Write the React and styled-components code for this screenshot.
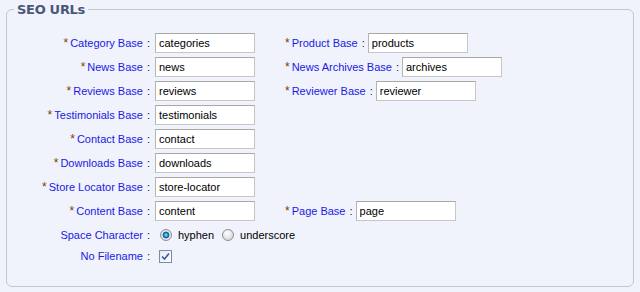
import styled, { createGlobalStyle } from "styled-components";

const GlobalStyle = createGlobalStyle`
    html, body {
        margin: 0;
        padding: 0;
        background: #f0f2fc;
    }
    body {
        font-family: "Liberation Sans", Arial, sans-serif;
        font-size: 11px;
    }
`;

const Page = styled.div`
    width: 640px;
    height: 292px;
    padding: 2px 6px 0 6px;
    box-sizing: border-box;
`;

const Fieldset = styled.fieldset`
    margin: 0;
    padding: 16px 0 20px 0;
    border: 1px solid #c4c6d0;
    border-radius: 6px;
    height: 285px;
    box-sizing: border-box;
`;

const Legend = styled.legend`
    margin-left: 7px;
    padding: 0 3px;
    font-size: 13px;
    font-weight: bold;
    color: #4a5878;
    font-family: "DejaVu Sans", Tahoma, sans-serif;
    letter-spacing: -0.3px;
`;

const Form = styled.div`
    display: flex;
    flex-direction: column;
    gap: 4px;
`;

const Row = styled.div`
    display: flex;
    align-items: center;
    height: ${p => p.$h || 20}px;
`;

const LabelCell = styled.div`
    width: 143px;
    text-align: right;
    flex-shrink: 0;
    white-space: nowrap;
    margin-right: 5px;
`;

const Group = styled.div`
    display: flex;
    align-items: center;
    margin-left: 30px;
`;

const Star = styled.span`
    color: #7a4400;
    font-size: 12px;
    margin-right: 2px;
`;

const Name = styled.span`
    color: #1a1ae6;
`;

const Colon = styled.span`
    color: #222;
    margin-left: 4px;
    margin-right: ${p => p.$after ?? 4}px;
`;

const Input = styled.input`
    width: 100px;
    height: 20px;
    box-sizing: border-box;
    border: 1px solid #c6c6c6;
    border-top-color: #a8a8a8;
    border-left-color: #b4b4b4;
    background: #fff;
    padding: 0 3px;
    font-family: "Liberation Sans", Arial, sans-serif;
    font-size: 11px;
    color: #000;
    outline: none;
`;

const Options = styled.div`
    display: flex;
    align-items: center;
    margin-left: 5px;
    color: #000;
`;

const RadioDot = styled.span`
    width: 12px;
    height: 12px;
    border-radius: 50%;
    box-sizing: border-box;
    border: 1px solid #8a8f98;
    background: ${p => p.$on
        ? "radial-gradient(circle at 50% 50%, #9fe0ff 0, #1e88c8 2px, #0a4f80 3.4px, #e8ebee 3.6px, #d2d6da 100%)"
        : "radial-gradient(circle at 40% 35%, #ffffff 0, #e4e6e8 50%, #c8ccd0 100%)"};
    margin-right: 6px;
`;

const OptText = styled.span`
    margin-right: ${p => p.$gap || 0}px;
`;

const Check = styled.span`
    width: 13px;
    height: 13px;
    box-sizing: border-box;
    border: 1px solid #7b8ba8;
    background: linear-gradient(135deg, #e4e8ee, #ffffff);
    display: flex;
    align-items: center;
    justify-content: center;
    margin-left: 4px;
`;

const Field = ({ label, value }) => (
    <>
        <Star>*</Star>
        <Name>{label}</Name>
        <Colon $after={3}>:</Colon>
        <Input defaultValue={value} />
    </>
);

const Label = ({ label, star = true }) => (
    <LabelCell>
        {star && <Star>*</Star>}
        <Name>{label}</Name>
        <Colon $after={0}>:</Colon>
    </LabelCell>
);

const rows = [
    ["Category Base", "categories", ["Product Base", "products"]],
    ["News Base", "news", ["News Archives Base", "archives"]],
    ["Reviews Base", "reviews", ["Reviewer Base", "reviewer"]],
    ["Testimonials Base", "testimonials"],
    ["Contact Base", "contact"],
    ["Downloads Base", "downloads"],
    ["Store Locator Base", "store-locator"],
    ["Content Base", "content", ["Page Base", "page"]],
];

const App = () => (
    <Page>
        <GlobalStyle />
        <Fieldset>
            <Legend>SEO URLs</Legend>
            <Form>
                {rows.map(([label, value, second]) => (
                    <Row key={label}>
                        <Label label={label} />
                        <Input defaultValue={value} />
                        {second && (
                            <Group>
                                <Field label={second[0]} value={second[1]} />
                            </Group>
                        )}
                    </Row>
                ))}
                <Row>
                    <Label label="Space Character" star={false} />
                    <Options>
                        <RadioDot $on />
                        <OptText $gap={8}>hyphen</OptText>
                        <RadioDot />
                        <OptText>underscore</OptText>
                    </Options>
                </Row>
                <Row $h={14}>
                    <Label label="No Filename" star={false} />
                    <Check>
                        <svg width="9" height="9" viewBox="0 0 9 9">
                            <path d="M1 4.5 L3.5 7 L8 1.5" fill="none" stroke="#3a5aa8" strokeWidth="1.6" />
                        </svg>
                    </Check>
                </Row>
            </Form>
        </Fieldset>
    </Page>
);

export default App;
